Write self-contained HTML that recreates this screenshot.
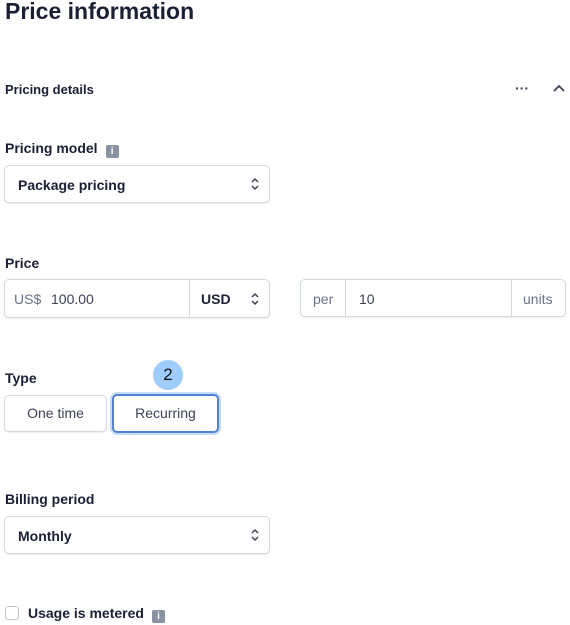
<!DOCTYPE html><html><head><style>
body{margin:0;width:570px;height:625px;background:#fff;font-family:"Liberation Sans",sans-serif;color:#3c4257;position:relative;overflow:hidden}
.a{position:absolute}
.lbl{font-size:14px;font-weight:bold;color:#3c4257}
.box{border:1px solid #d5d8de;border-radius:5px;box-shadow:0 1px 1px rgba(0,0,0,.08);box-sizing:border-box;background:#fff}
.chev{position:absolute;right:9px;top:50%;margin-top:-7px}
.info{display:inline-block;width:13px;height:13px;background:#8792a2;border-radius:2px;color:#fff;font-size:10px;text-align:center;line-height:13px;font-weight:bold;vertical-align:-1px;margin-left:8px}
</style></head><body>
<div class="a" style="left:5px;top:-2px;font-size:23px;font-weight:bold;color:#1a1f36">Price information</div>
<div class="a lbl" style="left:5px;top:82px;font-size:13px;color:#1a1f36">Pricing details</div>
<div class="a" style="left:515px;top:80px;font-size:14px;font-weight:bold;color:#3c4257">···</div>
<svg class="a" style="left:553px;top:84px" width="12" height="8"><path d="M1 7L6 2L11 7" fill="none" stroke="#3c4257" stroke-width="1.8"/></svg>
<div class="a lbl" style="left:5px;top:140px;color:#1a1f36">Pricing model<span class="info">i</span></div>
<div class="a box" style="left:4px;top:165px;width:266px;height:38px"><span class="a" style="left:13px;top:11px;font-size:14px;font-weight:bold;color:#1a1f36">Package pricing</span><svg class="chev" width="10" height="14"><path d="M2 5L5 2L8 5M2 9L5 12L8 9" fill="none" stroke="#3c4257" stroke-width="1.5"/></svg></div>
<div class="a lbl" style="left:5px;top:255px;color:#1a1f36">Price</div>
<div class="a box" style="left:4px;top:279px;width:266px;height:39px"><span class="a" style="left:9px;top:11px;font-size:14px;color:#697386">US$</span><span class="a" style="left:46px;top:11px;font-size:14px;color:#3c4257">100.00</span><div class="a" style="left:184px;top:0;width:1px;height:37px;background:#d5d8de"></div><span class="a" style="left:196px;top:11px;font-size:14px;font-weight:bold;color:#1a1f36">USD</span><svg class="chev" width="10" height="14"><path d="M2 5L5 2L8 5M2 9L5 12L8 9" fill="none" stroke="#3c4257" stroke-width="1.5"/></svg></div>
<div class="a box" style="left:300px;top:279px;width:266px;height:38px"><span class="a" style="left:12px;top:11px;font-size:14px;color:#697386">per</span><div class="a" style="left:44px;top:0;width:1px;height:36px;background:#d5d8de"></div><span class="a" style="left:58px;top:11px;font-size:14px">10</span><div class="a" style="left:210px;top:0;width:1px;height:36px;background:#d5d8de"></div><span class="a" style="left:222px;top:11px;font-size:14px;color:#697386">units</span></div>
<div class="a lbl" style="left:5px;top:370px;color:#1a1f36">Type</div>
<div class="a" style="left:153px;top:360px;width:30px;height:30px;border-radius:50%;background:#9fcdfb;text-align:center;line-height:30px;font-size:17px;color:#111">2</div>
<div class="a box" style="left:4px;top:395px;width:103px;height:37px;text-align:center;line-height:35px;font-size:14px">One time</div>
<div class="a" style="left:112px;top:394px;width:107px;height:39px;border:2px solid #5182d8;border-radius:5px;box-sizing:border-box;box-shadow:0 0 0 2px #c7dbf5;text-align:center;line-height:35px;font-size:14px">Recurring</div>
<div class="a lbl" style="left:5px;top:491px;color:#1a1f36">Billing period</div>
<div class="a box" style="left:4px;top:516px;width:266px;height:38px"><span class="a" style="left:13px;top:11px;font-size:14px;font-weight:bold;color:#1a1f36">Monthly</span><svg class="chev" width="10" height="14"><path d="M2 5L5 2L8 5M2 9L5 12L8 9" fill="none" stroke="#3c4257" stroke-width="1.5"/></svg></div>
<div class="a" style="left:5px;top:606px;width:14px;height:14px;border:1px solid #c0c5cd;border-radius:3px;box-sizing:border-box"></div>
<div class="a lbl" style="left:28px;top:605px;color:#1a1f36">Usage is metered<span class="info">i</span></div>
</body></html>
